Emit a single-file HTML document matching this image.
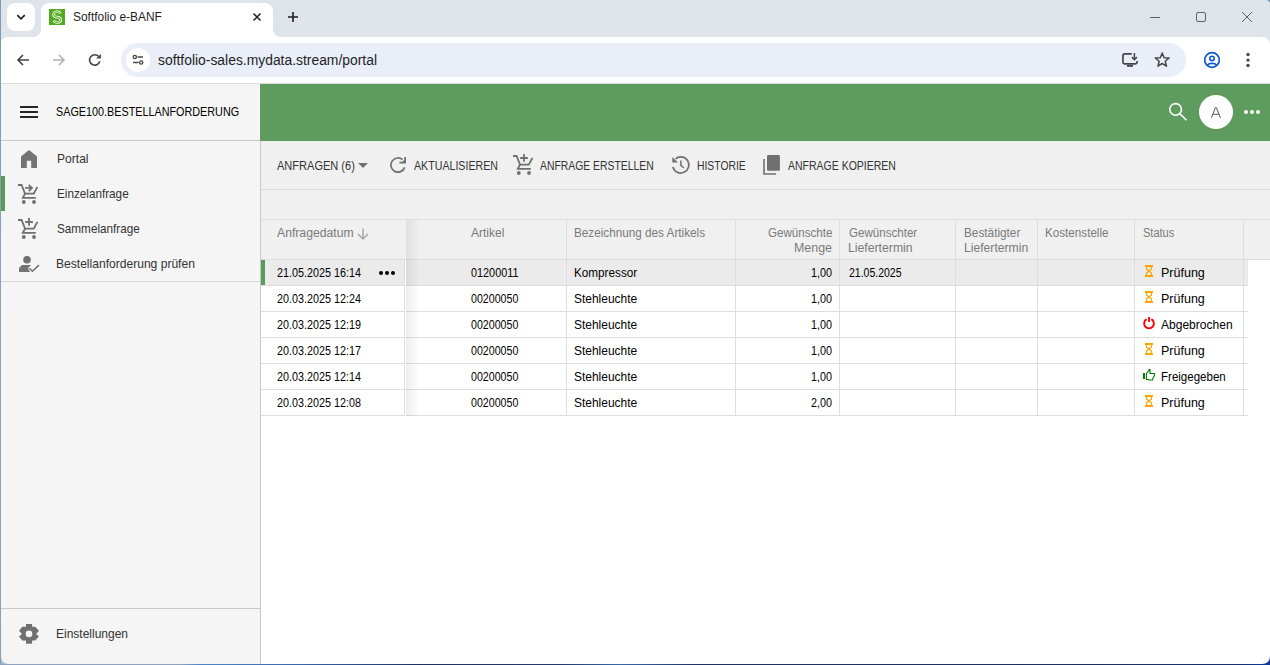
<!DOCTYPE html>
<html><head><meta charset="utf-8">
<style>
*{box-sizing:border-box;margin:0;padding:0}
html,body{width:1270px;height:665px;overflow:hidden}
body{background:#dfe3ea;font-family:"Liberation Sans",sans-serif;position:relative;color:#1f1f1f}
.a{position:absolute}
.t{position:absolute;white-space:nowrap;line-height:1;transform-origin:0 0}
svg{position:absolute;overflow:visible}
</style></head><body>
<!-- TAB STRIP -->
<div class="a" style="left:7px;top:3px;width:28px;height:28px;border-radius:8px;background:#fff"></div>
<svg style="left:15px;top:11px" width="12" height="12" viewBox="0 0 12 12"><path d="M2.3 4.2 L6 7.8 L9.7 4.2" fill="none" stroke="#1f1f1f" stroke-width="1.7"/></svg>
<div class="a" style="left:41px;top:3px;width:232px;height:34px;border-radius:8px 8px 0 0;background:#fff"></div>
<div class="a" style="left:33px;top:29px;width:8px;height:8px;background:radial-gradient(circle at 0 0,rgba(255,255,255,0) 7.5px,#fff 8.5px)"></div>
<div class="a" style="left:273px;top:29px;width:8px;height:8px;background:radial-gradient(circle at 100% 0,rgba(255,255,255,0) 7.5px,#fff 8.5px)"></div>
<!-- favicon -->
<div class="a" style="left:49px;top:9px;width:16px;height:16px;background:#52aa22"></div>
<svg style="left:49px;top:9px" width="16" height="16" viewBox="0 0 16 16"><path d="M11.5 4.6A3.6 2.7 0 1 0 8.2 8.1A3.6 2.7 0 1 1 4.7 11.6" fill="none" stroke="#f0f8ea" stroke-width="2.6"/><path d="M11.5 4.6A3.6 2.7 0 1 0 8.2 8.1A3.6 2.7 0 1 1 4.7 11.6" fill="none" stroke="#52aa22" stroke-width="1"/></svg>
<svg style="left:253px;top:13px" width="8" height="8" viewBox="0 0 8 8"><path d="M0.5 0.5L7.5 7.5M7.5 0.5L0.5 7.5" stroke="#1f1f1f" stroke-width="1.5"/></svg>
<svg style="left:287px;top:11px" width="12" height="12" viewBox="0 0 12 12"><path d="M6 1V11M1 6H11" stroke="#1f1f1f" stroke-width="1.6"/></svg>
<!-- window controls -->
<div class="a" style="left:1150px;top:17px;width:10px;height:1px;background:#5f6368"></div>
<div class="a" style="left:1196px;top:12px;width:10px;height:10px;border:1px solid #5f6368;border-radius:2px"></div>
<svg style="left:1241px;top:11px" width="12" height="12" viewBox="0 0 12 12"><path d="M1 1L11 11M11 1L1 11" stroke="#5f6368" stroke-width="1"/></svg>

<!-- TOOLBAR -->
<div class="a" style="left:0;top:37px;width:1270px;height:47px;background:#fff;border-radius:8px 8px 0 0"></div>
<div class="a" style="left:0;top:83px;width:1270px;height:1px;background:#dcdcdc"></div>
<svg style="left:15px;top:52px" width="16" height="16" viewBox="0 0 16 16"><path d="M14 8H3M8 3L3 8L8 13" fill="none" stroke="#474747" stroke-width="1.7"/></svg>
<svg style="left:51px;top:52px" width="16" height="16" viewBox="0 0 16 16"><path d="M2 8H13M8 3L13 8L8 13" fill="none" stroke="#b4b4b4" stroke-width="1.6"/></svg>
<svg style="left:87px;top:52px" width="16" height="16" viewBox="0 0 16 16"><path d="M11.8 4.6A5.2 5.2 0 1 0 12.8 9.3" fill="none" stroke="#474747" stroke-width="1.6"/><path d="M9.1 6.6H13.9V1.9Z" fill="#474747"/></svg>
<div class="a" style="left:121px;top:43px;width:1065px;height:34px;border-radius:17px;background:#e9eef8"></div>
<div class="a" style="left:126px;top:48px;width:24px;height:24px;border-radius:12px;background:#fff"></div>
<svg style="left:130px;top:52px" width="16" height="16" viewBox="0 0 16 16"><circle cx="4.8" cy="5" r="1.6" fill="none" stroke="#474747" stroke-width="1.4"/><path d="M7.5 5H13M3 10.5H8.5" stroke="#474747" stroke-width="1.4"/><circle cx="11.2" cy="10.5" r="1.6" fill="none" stroke="#474747" stroke-width="1.4"/></svg>
<svg style="left:1121px;top:52px" width="18" height="16" viewBox="0 0 18 16"><path d="M10.8 1.95H3.5Q1.95 1.95 1.95 3.5V10.3Q1.95 11.85 3.5 11.85H14.5Q16.05 11.85 16.05 10.3V9" fill="none" stroke="#474747" stroke-width="1.7"/><path d="M13.4 1.1V7.5M10.9 5.1L13.4 7.6L15.9 5.1" fill="none" stroke="#474747" stroke-width="1.5"/><rect x="6" y="12.9" width="6" height="1.9" fill="#474747"/></svg>
<svg style="left:1154px;top:52px" width="16" height="16" viewBox="0 0 16 16"><path d="M8.20 1.00L10.08 5.71L15.14 6.04L11.24 9.29L12.49 14.21L8.20 11.50L3.91 14.21L5.16 9.29L1.26 6.04L6.32 5.71Z" fill="none" stroke="#474747" stroke-width="1.5" stroke-linejoin="round"/></svg>
<svg style="left:1203px;top:51px" width="18" height="18" viewBox="0 0 18 18"><circle cx="9" cy="9" r="7.3" fill="none" stroke="#0b57d0" stroke-width="1.7"/><circle cx="9" cy="7.4" r="2.2" fill="none" stroke="#0b57d0" stroke-width="1.6"/><path d="M4.3 14.2C6 11.8 12 11.8 13.7 14.2" fill="none" stroke="#0b57d0" stroke-width="1.6"/></svg>
<svg style="left:1240px;top:50px" width="16" height="20" viewBox="0 0 16 20"><circle cx="8" cy="4.5" r="1.7" fill="#474747"/><circle cx="8" cy="10.1" r="1.7" fill="#474747"/><circle cx="8" cy="15.5" r="1.7" fill="#474747"/></svg>

<!-- SIDEBAR -->
<div class="a" style="left:0;top:84px;width:260px;height:581px;background:#f5f5f5"></div><div class="a" style="left:259px;top:84px;width:1px;height:57px;background:#fff"></div>
<div class="a" style="left:0;top:140px;width:260px;height:1px;background:#cacaca"></div>
<div class="a" style="left:20px;top:106px;width:18px;height:2px;background:#262626"></div>
<div class="a" style="left:20px;top:111px;width:18px;height:2px;background:#262626"></div>
<div class="a" style="left:20px;top:116px;width:18px;height:2px;background:#262626"></div>
<svg style="left:21px;top:150px" width="16" height="18" viewBox="0 0 16 18"><path d="M8 0L16 6.5V18H10.2V10.8H5.8V18H0V6.5Z" fill="#747474"/></svg>
<div class="a" style="left:1px;top:176px;width:4px;height:35px;background:#5a9b5a"></div>
<svg style="left:13px;top:179px" width="30" height="28" viewBox="0 0 30 28"><path d="M5 6H8.6L12 14.7H20.8L24.4 7.9" fill="none" stroke="#707070" stroke-width="1.8"/><path d="M12 14.7L9.8 18.8H22.8" fill="none" stroke="#707070" stroke-width="1.8"/><circle cx="10.8" cy="23" r="1.9" fill="#707070"/><circle cx="21" cy="23" r="1.9" fill="#707070"/><path d="M12.1 8.9H19M15.7 5.8L19 8.9L15.7 12.1" fill="none" stroke="#707070" stroke-width="1.8"/></svg>
<svg style="left:13px;top:214px" width="30" height="28" viewBox="0 0 30 28"><path d="M5 6H8.6L12 14.7H20.8L24.4 7.9" fill="none" stroke="#707070" stroke-width="1.8"/><path d="M12 14.7L9.8 18.8H22.8" fill="none" stroke="#707070" stroke-width="1.8"/><circle cx="10.8" cy="23" r="1.9" fill="#707070"/><circle cx="21" cy="23" r="1.9" fill="#707070"/><path d="M12.2 8H19.9M16 4.1V11.8" fill="none" stroke="#707070" stroke-width="1.8"/></svg>
<svg style="left:19px;top:256px" width="20" height="16" viewBox="0 0 20 16"><circle cx="8" cy="3.8" r="3.8" fill="#707070"/><path d="M0 16V12L3 9H12L9 12.3L11 16Z" fill="#747474"/><path d="M10.5 12.2L13.4 15.2L19.9 9.1" fill="none" stroke="#707070" stroke-width="1.5"/></svg>
<div class="a" style="left:0;top:281px;width:260px;height:1px;background:#d6d6d6"></div>
<div class="a" style="left:0;top:608px;width:260px;height:1px;background:#c8c8c8"></div>
<svg style="left:19px;top:624px" width="20" height="20" viewBox="0 0 20 20"><path d="M7 0H13.1V2.8H16.2L19.9 6.8L17.2 9.9L19.9 12.6L16.2 16.6H13.1V19.7H7V16.6H3.3L0 12.6L3 9.9L0 6.8L3.3 2.8H7Z" fill="#707070"/><circle cx="10" cy="9.9" r="3.3" fill="#f5f5f5"/></svg>

<!-- HEADER GREEN -->
<div class="a" style="left:260px;top:84px;width:1010px;height:57px;background:#5e9b5e"></div>
<svg style="left:1168px;top:102px" width="19" height="19" viewBox="0 0 19 19"><circle cx="7.6" cy="7.4" r="5.8" fill="none" stroke="#fff" stroke-width="1.6"/><path d="M11.8 11.6L18.5 18.3" stroke="#fff" stroke-width="1.6"/></svg>
<div class="a" style="left:1199px;top:95px;width:34px;height:34px;border-radius:17px;background:#fff"></div>
<svg style="left:1199px;top:95px" width="34" height="34" viewBox="0 0 34 34"><path d="M12.4 22.8L16.4 12.6H17.4L21.4 22.8M14.1 19.3H19.7" fill="none" stroke="#555" stroke-width="1"/></svg>
<div class="a" style="left:1244px;top:110px;width:4px;height:4px;border-radius:2px;background:#fff"></div>
<div class="a" style="left:1250px;top:110px;width:4px;height:4px;border-radius:2px;background:#fff"></div>
<div class="a" style="left:1256px;top:110px;width:4px;height:4px;border-radius:2px;background:#fff"></div>

<!-- MAIN -->
<div class="a" style="left:260px;top:141px;width:1010px;height:524px;background:#fff;border-left:1px solid #c8c8c8"></div>
<div class="a" style="left:261px;top:141px;width:1009px;height:118px;background:#f0f0f0"></div>
<div class="a" style="left:261px;top:189px;width:1009px;height:1px;background:#dcdcdc"></div>
<!-- toolbar icons -->
<svg style="left:358px;top:163px" width="10" height="5" viewBox="0 0 10 5"><path d="M0 0H10L5 5Z" fill="#707070"/></svg>
<svg style="left:390px;top:157px" width="16" height="16" viewBox="0 0 16 16"><path d="M12.6 2.6A7.1 7.1 0 1 0 14.7 10.4" fill="none" stroke="#707070" stroke-width="1.7"/><path d="M9.4 5.7H15.1V0.1" fill="none" stroke="#707070" stroke-width="1.7"/><path d="M11.5 5.7H15.1V2.1Z" fill="#707070"/></svg>
<svg style="left:508px;top:150px" width="30" height="28" viewBox="0 0 30 28"><path d="M5 6H8.6L12 14.7H20.8L24.4 7.9" fill="none" stroke="#707070" stroke-width="1.8"/><path d="M12 14.7L9.8 18.8H22.8" fill="none" stroke="#707070" stroke-width="1.8"/><circle cx="10.8" cy="23" r="1.9" fill="#707070"/><circle cx="21" cy="23" r="1.9" fill="#707070"/><path d="M12.2 8H19.9M16 4.1V11.8" fill="none" stroke="#707070" stroke-width="1.8"/></svg>
<svg style="left:666px;top:150px" width="30" height="28" viewBox="0 0 30 28"><path d="M9.4 8.8A8.1 8.1 0 1 1 6.9 17" fill="none" stroke="#707070" stroke-width="1.7"/><path d="M6.3 7V12.6H11.9Z" fill="#707070"/><path d="M14.9 10.4V15.3L18 18" fill="none" stroke="#707070" stroke-width="1.5"/></svg>
<svg style="left:756px;top:150px" width="30" height="28" viewBox="0 0 30 28"><rect x="11" y="5" width="12.9" height="15.8" rx="1.3" fill="#707070"/><path d="M8 9V24H19.9" fill="none" stroke="#707070" stroke-width="1.6"/></svg>

<!-- TABLE HEADER -->
<div class="a" style="left:261px;top:219px;width:1009px;height:1px;background:#dedede"></div>
<div class="a" style="left:261px;top:259px;width:1009px;height:1px;background:#dedede"></div>
<svg style="left:357px;top:228px" width="12" height="12" viewBox="0 0 12 12"><path d="M6 0.5V11M1 6L6 11L11 6" fill="none" stroke="#a8a8a8" stroke-width="1.5"/></svg>

<!-- TABLE BODY -->
<div class="a" style="left:261px;top:260px;width:987px;height:25px;background:#ebebeb"></div>
<div class="a" style="left:261px;top:260px;width:4px;height:25px;background:#5a9b5a"></div>
<div id="rowlines"></div>
<div class="a" style="left:261px;top:285px;width:987px;height:1px;background:#dedede"></div>
<div class="a" style="left:261px;top:311px;width:987px;height:1px;background:#dedede"></div>
<div class="a" style="left:261px;top:337px;width:987px;height:1px;background:#dedede"></div>
<div class="a" style="left:261px;top:363px;width:987px;height:1px;background:#dedede"></div>
<div class="a" style="left:261px;top:389px;width:987px;height:1px;background:#dedede"></div>
<div class="a" style="left:261px;top:415px;width:987px;height:1px;background:#dedede"></div>
<!-- column lines -->
<div class="a" style="left:404px;top:260px;width:1px;height:156px;background:#dedede"></div>
<div class="a" style="left:566px;top:220px;width:1px;height:196px;background:#dedede"></div>
<div class="a" style="left:735px;top:220px;width:1px;height:196px;background:#dedede"></div>
<div class="a" style="left:839px;top:220px;width:1px;height:196px;background:#dedede"></div>
<div class="a" style="left:955px;top:220px;width:1px;height:196px;background:#dedede"></div>
<div class="a" style="left:1037px;top:220px;width:1px;height:196px;background:#dedede"></div>
<div class="a" style="left:1134px;top:220px;width:1px;height:196px;background:#dedede"></div>
<div class="a" style="left:1243px;top:220px;width:1px;height:196px;background:#dedede"></div>
<!-- frozen shadow -->
<div class="a" style="left:406px;top:220px;width:14px;height:196px;background:linear-gradient(to right,rgba(0,0,0,.07),rgba(0,0,0,0))"></div>
<div class="a" style="left:405px;top:260px;width:1px;height:156px;background:#fff"></div>
<!-- row 1 dots -->
<div class="a" style="left:379px;top:271px;width:4px;height:4px;border-radius:2px;background:#000"></div>
<div class="a" style="left:385px;top:271px;width:4px;height:4px;border-radius:2px;background:#000"></div>
<div class="a" style="left:391px;top:271px;width:4px;height:4px;border-radius:2px;background:#000"></div>

<svg style="left:1145px;top:265px" width="8" height="12" viewBox="0 0 8 12"><path d="M0 1H8M0 11H8" stroke="#ffa500" stroke-width="2"/><path d="M1.5 2V4L4 6L1.5 8V10M6.5 2V4L4 6L6.5 8V10" fill="none" stroke="#ffa500" stroke-width="1.2"/></svg>
<svg style="left:1145px;top:291px" width="8" height="12" viewBox="0 0 8 12"><path d="M0 1H8M0 11H8" stroke="#ffa500" stroke-width="2"/><path d="M1.5 2V4L4 6L1.5 8V10M6.5 2V4L4 6L6.5 8V10" fill="none" stroke="#ffa500" stroke-width="1.2"/></svg>
<svg style="left:1143px;top:317px" width="12" height="12" viewBox="0 0 12 12"><path d="M3.6 2.2A4.9 4.9 0 1 0 8.4 2.2" fill="none" stroke="#f00" stroke-width="1.9"/><path d="M6 0V5" stroke="#f00" stroke-width="1.9"/></svg>
<svg style="left:1145px;top:343px" width="8" height="12" viewBox="0 0 8 12"><path d="M0 1H8M0 11H8" stroke="#ffa500" stroke-width="2"/><path d="M1.5 2V4L4 6L1.5 8V10M6.5 2V4L4 6L6.5 8V10" fill="none" stroke="#ffa500" stroke-width="1.2"/></svg>
<svg style="left:1143px;top:369px" width="12" height="12" viewBox="0 0 12 12"><rect x="0" y="4" width="2" height="6" fill="#008000"/><path d="M3.5 10.5V4.5L6 1.5V0.5H7V4.5H11.5V6.5L10 9L9.5 11H6L5.5 10.5Z" fill="none" stroke="#008000" stroke-width="1.1"/></svg>
<svg style="left:1145px;top:395px" width="8" height="12" viewBox="0 0 8 12"><path d="M0 1H8M0 11H8" stroke="#ffa500" stroke-width="2"/><path d="M1.5 2V4L4 6L1.5 8V10M6.5 2V4L4 6L6.5 8V10" fill="none" stroke="#ffa500" stroke-width="1.2"/></svg>

<div class="t" style="left:72.81px;top:10.84px;font-size:12px;color:#1f1f1f;transform:scaleX(0.9943);">Softfolio e-BANF</div>
<div class="t" style="left:158.30px;top:53.15px;font-size:14px;color:#1f1f1f;transform:scaleX(0.9909);">softfolio-sales.mydata.stream/portal</div>
<div class="t" style="left:56.47px;top:105.00px;font-size:13px;color:#000;transform:scaleX(0.8311);">SAGE100.BESTELLANFORDERUNG</div>
<div class="t" style="left:56.77px;top:152.00px;font-size:13px;color:#333333;transform:scaleX(0.9281);">Portal</div>
<div class="t" style="left:56.80px;top:187.00px;font-size:13px;color:#333333;transform:scaleX(0.9013);">Einzelanfrage</div>
<div class="t" style="left:56.90px;top:222.00px;font-size:13px;color:#333333;transform:scaleX(0.9022);">Sammelanfrage</div>
<div class="t" style="left:55.87px;top:257.00px;font-size:13px;color:#333333;transform:scaleX(0.9284);">Bestellanforderung prüfen</div>
<div class="t" style="left:56.38px;top:627.00px;font-size:13px;color:#333333;transform:scaleX(0.9224);">Einstellungen</div>
<div class="t" style="left:277.40px;top:159.00px;font-size:13px;color:#333333;transform:scaleX(0.8484);">ANFRAGEN (6)</div>
<div class="t" style="left:414.00px;top:159.00px;font-size:13px;color:#333333;transform:scaleX(0.8186);">AKTUALISIEREN</div>
<div class="t" style="left:540.00px;top:159.00px;font-size:13px;color:#333333;transform:scaleX(0.7986);">ANFRAGE ERSTELLEN</div>
<div class="t" style="left:696.70px;top:159.00px;font-size:13px;color:#333333;transform:scaleX(0.7967);">HISTORIE</div>
<div class="t" style="left:788.20px;top:159.00px;font-size:13px;color:#333333;transform:scaleX(0.8075);">ANFRAGE KOPIEREN</div>
<div class="t" style="left:277.00px;top:226.84px;font-size:12px;color:#7a7a7a;transform:scaleX(1.0160);">Anfragedatum</div>
<div class="t" style="left:471.00px;top:226.84px;font-size:12px;color:#7a7a7a;transform:scaleX(1.0000);">Artikel</div>
<div class="t" style="left:574.22px;top:226.84px;font-size:12px;color:#7a7a7a;transform:scaleX(0.9774);">Bezeichnung des Artikels</div>
<div class="t" style="left:767.90px;top:226.84px;font-size:12px;color:#7a7a7a;transform:scaleX(0.9667);">Gewünschte</div>
<div class="t" style="left:794.47px;top:241.84px;font-size:12px;color:#7a7a7a;transform:scaleX(1.0343);">Menge</div>
<div class="t" style="left:848.70px;top:226.84px;font-size:12px;color:#7a7a7a;transform:scaleX(0.9648);">Gewünschter</div>
<div class="t" style="left:847.68px;top:241.84px;font-size:12px;color:#7a7a7a;transform:scaleX(1.0194);">Liefertermin</div>
<div class="t" style="left:963.72px;top:226.84px;font-size:12px;color:#7a7a7a;transform:scaleX(0.9821);">Bestätigter</div>
<div class="t" style="left:963.69px;top:241.84px;font-size:12px;color:#7a7a7a;transform:scaleX(1.0129);">Liefertermin</div>
<div class="t" style="left:1045.23px;top:226.84px;font-size:12px;color:#7a7a7a;transform:scaleX(0.9719);">Kostenstelle</div>
<div class="t" style="left:1142.78px;top:226.84px;font-size:12px;color:#7a7a7a;transform:scaleX(0.9182);">Status</div>
<div class="t" style="left:277.30px;top:267.14px;font-size:12px;color:#000;transform:scaleX(0.8978);">21.05.2025 16:14</div>
<div class="t" style="left:471.00px;top:267.14px;font-size:12px;color:#000;transform:scaleX(0.9038);">01200011</div>
<div class="t" style="left:574.02px;top:267.14px;font-size:12px;color:#000;transform:scaleX(0.9766);">Kompressor</div>
<div class="t" style="left:811.30px;top:267.14px;font-size:12px;color:#000;transform:scaleX(0.9000);">1,00</div>
<div class="t" style="left:848.50px;top:267.14px;font-size:12px;color:#000;transform:scaleX(0.8750);">21.05.2025</div>
<div class="t" style="left:1160.66px;top:267.14px;font-size:12px;color:#000;transform:scaleX(1.0425);">Prüfung</div>
<div class="t" style="left:277.30px;top:293.14px;font-size:12px;color:#000;transform:scaleX(0.8978);">20.03.2025 12:24</div>
<div class="t" style="left:471.00px;top:293.14px;font-size:12px;color:#000;transform:scaleX(0.8868);">00200050</div>
<div class="t" style="left:574.00px;top:293.14px;font-size:12px;color:#000;transform:scaleX(0.9968);">Stehleuchte</div>
<div class="t" style="left:811.30px;top:293.14px;font-size:12px;color:#000;transform:scaleX(0.9000);">1,00</div>
<div class="t" style="left:1160.66px;top:293.14px;font-size:12px;color:#000;transform:scaleX(1.0425);">Prüfung</div>
<div class="t" style="left:277.30px;top:319.14px;font-size:12px;color:#000;transform:scaleX(0.8978);">20.03.2025 12:19</div>
<div class="t" style="left:471.00px;top:319.14px;font-size:12px;color:#000;transform:scaleX(0.8868);">00200050</div>
<div class="t" style="left:574.00px;top:319.14px;font-size:12px;color:#000;transform:scaleX(0.9968);">Stehleuchte</div>
<div class="t" style="left:811.30px;top:319.14px;font-size:12px;color:#000;transform:scaleX(0.9000);">1,00</div>
<div class="t" style="left:1161.10px;top:319.14px;font-size:12px;color:#000;transform:scaleX(1.0028);">Abgebrochen</div>
<div class="t" style="left:277.30px;top:345.14px;font-size:12px;color:#000;transform:scaleX(0.8978);">20.03.2025 12:17</div>
<div class="t" style="left:471.00px;top:345.14px;font-size:12px;color:#000;transform:scaleX(0.8868);">00200050</div>
<div class="t" style="left:574.00px;top:345.14px;font-size:12px;color:#000;transform:scaleX(0.9968);">Stehleuchte</div>
<div class="t" style="left:811.30px;top:345.14px;font-size:12px;color:#000;transform:scaleX(0.9000);">1,00</div>
<div class="t" style="left:1160.66px;top:345.14px;font-size:12px;color:#000;transform:scaleX(1.0425);">Prüfung</div>
<div class="t" style="left:277.30px;top:371.14px;font-size:12px;color:#000;transform:scaleX(0.8978);">20.03.2025 12:14</div>
<div class="t" style="left:471.00px;top:371.14px;font-size:12px;color:#000;transform:scaleX(0.8868);">00200050</div>
<div class="t" style="left:574.00px;top:371.14px;font-size:12px;color:#000;transform:scaleX(0.9968);">Stehleuchte</div>
<div class="t" style="left:811.30px;top:371.14px;font-size:12px;color:#000;transform:scaleX(0.9000);">1,00</div>
<div class="t" style="left:1160.74px;top:371.14px;font-size:12px;color:#000;transform:scaleX(0.9606);">Freigegeben</div>
<div class="t" style="left:277.30px;top:397.14px;font-size:12px;color:#000;transform:scaleX(0.8978);">20.03.2025 12:08</div>
<div class="t" style="left:471.00px;top:397.14px;font-size:12px;color:#000;transform:scaleX(0.8868);">00200050</div>
<div class="t" style="left:574.00px;top:397.14px;font-size:12px;color:#000;transform:scaleX(0.9968);">Stehleuchte</div>
<div class="t" style="left:811.30px;top:397.14px;font-size:12px;color:#000;transform:scaleX(0.9000);">2,00</div>
<div class="t" style="left:1160.66px;top:397.14px;font-size:12px;color:#000;transform:scaleX(1.0425);">Prüfung</div>

<!-- window frame decorations -->
<div class="a" style="left:0;top:0;width:1px;height:665px;background:linear-gradient(#7d9ab8,#8ca2b9 50%,#8a9fb6)"></div>
<div class="a" style="left:0;top:664px;width:1270px;height:1px;background:linear-gradient(to right,#8ea3bb 0,#8ea3bb 180px,#4f86c8 200px,#3a66a8 300px,#1f3160 420px,#243a6a 560px,#3a6aa8 620px,#1f3160 700px,#1c2f5c 1100px,#16306e 1240px,#0a3aa0 1270px)"></div>
<div class="a" style="left:1px;top:657px;width:7px;height:7px;background:radial-gradient(circle at 100% 0,rgba(169,192,220,0) 6.3px,#a3bad6 7.3px)"></div>
<div class="a" style="left:1263px;top:657px;width:7px;height:7px;background:radial-gradient(circle at 0 0,rgba(10,58,160,0) 6.3px,#0b3aa3 7.3px)"></div>
<div class="a" style="left:1266px;top:0;width:4px;height:4px;background:radial-gradient(circle at 0 100%,rgba(0,0,0,0) 3.5px,#6f93b5 4.5px)"></div>
</body></html>
